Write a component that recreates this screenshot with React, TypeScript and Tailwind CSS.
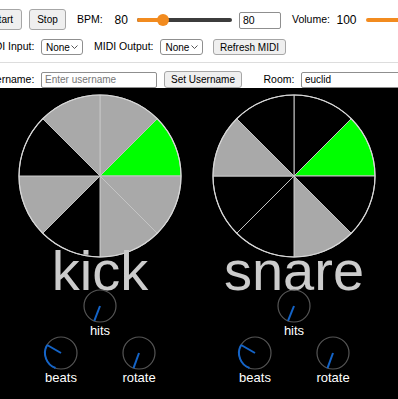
import React from "react";

const GRAY = "#a9a9a9";
const GREEN = "#00ff00";
const BLACK = "#000000";

const tracks = [
  {
    name: "kick",
    steps: [GRAY, GREEN, GRAY, GRAY, BLACK, GRAY, BLACK, GRAY],
    knobs: { hits: 201, beats: 300, rotate: 200 },
  },
  {
    name: "snare",
    steps: [BLACK, GREEN, BLACK, GRAY, BLACK, BLACK, GRAY, BLACK],
    knobs: { hits: 202, beats: 300, rotate: 200 },
  },
];

function Pie({ steps }: { steps: string[] }) {
  const cx = 82;
  const cy = 82;
  const r = 81;
  const pt = (deg: number) => {
    const a = (deg * Math.PI) / 180;
    return [cx + r * Math.sin(a), cy - r * Math.cos(a)];
  };
  return (
    <svg width="164" height="164" className="shrink-0">
      {steps.map((fill, i) => {
        const [x1, y1] = pt(i * 45);
        const [x2, y2] = pt((i + 1) * 45);
        return (
          <path
            key={i}
            d={`M${cx} ${cy} L${x1} ${y1} A${r} ${r} 0 0 1 ${x2} ${y2} Z`}
            fill={fill}
            stroke="#c4c4c4"
            strokeWidth={1}
          />
        );
      })}
      <circle cx={cx} cy={cy} r={r} fill="none" stroke="#d8d8d8" strokeWidth={1.2} />
    </svg>
  );
}

function Knob({ angle, label }: { angle: number; label: string }) {
  const c = 17;
  const r = 16;
  const start = 200;
  const pt = (deg: number) => {
    const a = (deg * Math.PI) / 180;
    return [c + r * Math.sin(a), c - r * Math.cos(a)];
  };
  const [sx, sy] = pt(start);
  const [ex, ey] = pt(angle);
  return (
    <div className="flex flex-col items-center w-[50px]">
      <svg width="34" height="34" className="overflow-visible">
        <circle cx={c} cy={c} r={r} fill="none" stroke="#555555" strokeWidth={1.2} />
        {angle - start > 3 && (
          <path
            d={`M${sx} ${sy} A${r} ${r} 0 ${angle - start > 180 ? 1 : 0} 1 ${ex} ${ey}`}
            fill="none"
            stroke="#1464c8"
            strokeWidth={2}
          />
        )}
        <line x1={c} y1={c} x2={ex} y2={ey} stroke="#1464c8" strokeWidth={2} />
      </svg>
      <span className="mt-[1px] text-[13px] leading-[13px] text-white">{label}</span>
    </div>
  );
}

function Btn({ className, children }: { className: string; children: React.ReactNode }) {
  return (
    <button
      className={`shrink-0 flex items-center justify-center border border-[#a6a6a6] rounded-[3px] bg-[#efefef] text-[10px] text-black ${className}`}
    >
      {children}
    </button>
  );
}

function Select({ className }: { className: string }) {
  return (
    <div
      className={`shrink-0 flex items-center justify-between h-[16px] border border-[#8f8f8f] rounded-[3px] bg-white pl-[4.5px] pr-[3px] text-[10px] text-black ${className}`}
    >
      <span>None</span>
      <svg width="7" height="4" className="mr-[1px]">
        <path d="M0.5 0.5 L3.5 3.5 L6.5 0.5" fill="none" stroke="#555" strokeWidth={1} />
      </svg>
    </div>
  );
}

export default function App() {
  return (
    <div className="w-[398px] h-[399px] overflow-hidden bg-white font-['Liberation_Sans',Arial,sans-serif] text-black">
      {/* transport */}
      <div className="flex items-center h-[21px] mt-[9px] ml-[-17px] whitespace-nowrap text-[10.5px]">
        <Btn className="w-[39px] h-[21px]">Start</Btn>
        <Btn className="ml-[7px] w-[37px] h-[21px]">Stop</Btn>
        <span className="ml-[11px] w-[37.5px] shrink-0">BPM:</span>
        <span className="w-[22.5px] shrink-0 text-[12px]">80</span>
        <div className="relative shrink-0 w-[95px] h-[12px] flex items-center mt-[1px]">
          <div className="h-[4.5px] w-full rounded-full bg-[#3c3c3c] flex overflow-hidden">
            <div className="h-full w-[26px] bg-[#f28b1f]" />
          </div>
          <div className="absolute left-[20px] top-0 w-[12px] h-[12px] rounded-full bg-[#f28b1f]" />
        </div>
        <input
          readOnly
          value="80"
          className="shrink-0 ml-[7px] mt-[1px] w-[42px] h-[17px] border border-[#8f8f8f] rounded-[2px] px-[3px] text-[10.5px] bg-white outline-none"
        />
        <span className="ml-[11px] w-[44.5px] shrink-0">Volume:</span>
        <span className="w-[29px] shrink-0 text-[12px]">100</span>
        <div className="shrink-0 w-[95px] h-[12px] flex items-center mt-[1px]">
          <div className="h-[4.5px] w-full rounded-full bg-[#f28b1f]" />
        </div>
      </div>

      {/* midi */}
      <div className="flex items-center h-[16px] mt-[9px] ml-[-17px] whitespace-nowrap text-[10.5px]">
        <span className="w-[57.5px] shrink-0">MIDI Input:</span>
        <Select className="w-[42px]" />
        <span className="ml-[11.5px] w-[66px] shrink-0">MIDI Output:</span>
        <Select className="w-[43px]" />
        <Btn className="ml-[10px] w-[73px] h-[16px]">Refresh MIDI</Btn>
      </div>

      <div className="mt-[7px] h-px bg-[#dddddd]" />

      {/* user / room */}
      <div className="flex items-center h-[17px] mt-[8px] ml-[-17px] whitespace-nowrap text-[10.5px]">
        <span className="w-[58px] shrink-0">Username:</span>
        <input
          readOnly
          placeholder="Enter username"
          className="shrink-0 w-[116px] h-[16px] border border-[#8f8f8f] rounded-[2px] px-[3px] text-[10px] bg-white outline-none placeholder:text-[#777777]"
        />
        <Btn className="ml-[7px] w-[78px] h-[17px]">Set Username</Btn>
        <span className="ml-[21.5px] w-[37.5px] shrink-0">Room:</span>
        <input
          readOnly
          value="euclid"
          className="shrink-0 w-[120px] h-[16px] border border-[#8f8f8f] rounded-[2px] px-[3px] text-[10px] bg-white outline-none"
        />
      </div>

      {/* tracks */}
      <div className="h-[311px] bg-black flex pl-[3px] pt-[6px]">
        {tracks.map((t) => (
          <div key={t.name} className="w-[194px] shrink-0 flex flex-col items-center">
            <Pie steps={t.steps} />
            <div className="-mt-[7px] text-[56px] leading-[40px] text-[#cccccc]">{t.name}</div>
            <div className="-mt-[2px]">
              <Knob angle={t.knobs.hits} label="hits" />
            </div>
            <div className="-mt-[1px] flex gap-[28px]">
              <Knob angle={t.knobs.beats} label="beats" />
              <Knob angle={t.knobs.rotate} label="rotate" />
            </div>
          </div>
        ))}
      </div>
    </div>
  );
}
